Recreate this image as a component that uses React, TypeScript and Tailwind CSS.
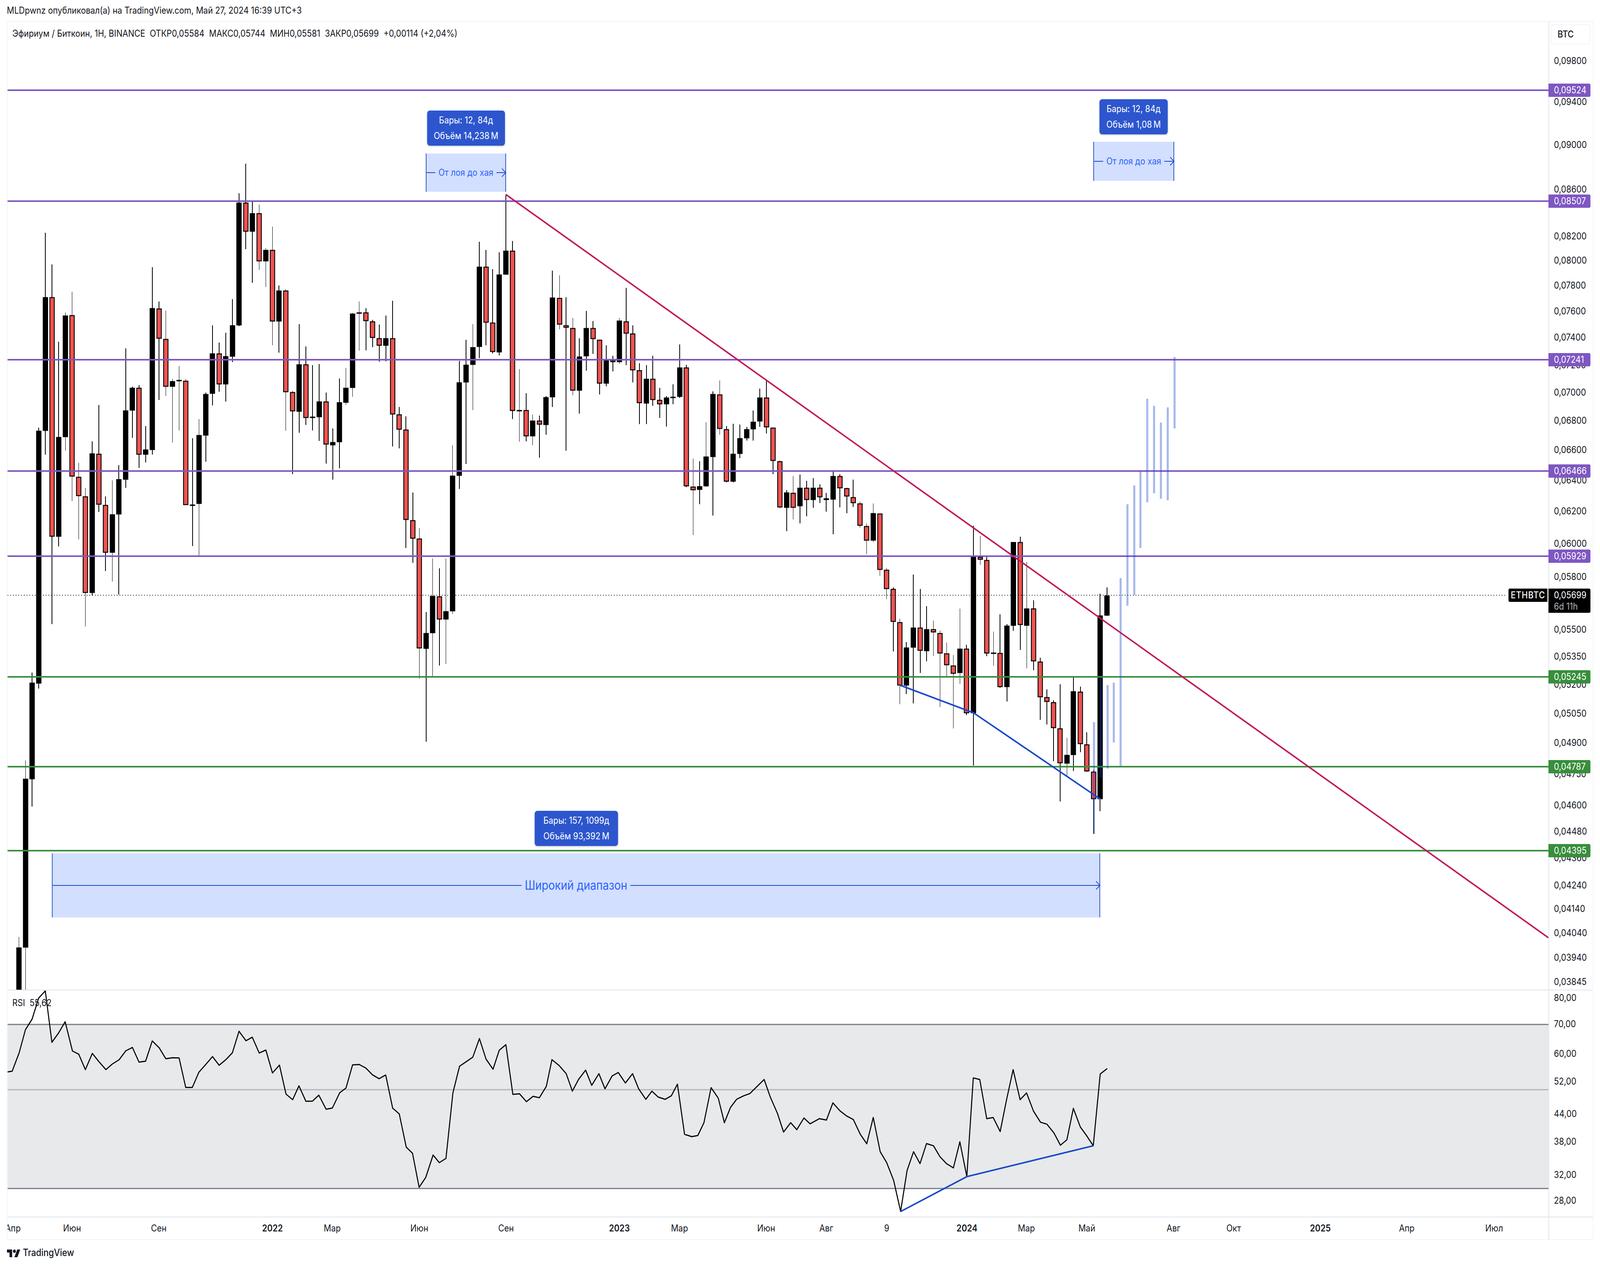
const PAGE_W = 4686;
const PLOT_X = 22;
const MAIN_Y = 56;
const RSI_Y = 2536;

type Candle = [number, "u" | "d", number, number, number, number];

// x, direction, body top, body bottom, wick top, wick bottom (page pixels)
const candles: Candle[] = [
  [55.5, "u", 2426, 2540, 2399, 2540], [75, "u", 1994, 2426, 1947, 2540], [94, "u", 1748, 1995, 1722, 2065],
  [113.6, "u", 1103, 1750, 1095, 1763], [133, "u", 761, 1103, 596, 1164], [152.5, "d", 761, 1374, 677, 1598],
  [172, "u", 1119, 1374, 875, 1399], [191.5, "u", 808, 1119, 800, 1154], [211, "d", 807, 1220, 747, 1283],
  [230.5, "d", 1221, 1270, 1185, 1381], [250, "d", 1271, 1518, 1249, 1604], [270, "u", 1161, 1518, 1130, 1525],
  [289.6, "d", 1162, 1292, 1037, 1311], [309, "d", 1293, 1415, 1271, 1462], [329, "u", 1317, 1415, 1230, 1489],
  [348, "u", 1227, 1317, 1191, 1522], [368, "u", 1051, 1228, 892, 1249], [387.5, "u", 993, 1051, 990, 1121],
  [407, "d", 993, 1164, 986, 1198], [426.6, "u", 1151, 1164, 1091, 1184], [446, "u", 789, 1152, 684, 1164],
  [466, "d", 790, 867, 772, 1024], [485.6, "d", 868, 990, 795, 1014], [505, "u", 976, 990, 970, 1133],
  [524.6, "u", 973, 975, 937, 1102], [544, "d", 975, 1293, 970, 1293], [563.7, "u", 1292, 1294, 1122, 1398],
  [583, "u", 1114, 1290, 1073, 1422], [602.7, "u", 1009, 1115, 1005, 1182], [622, "u", 905, 1008, 833, 1038],
  [642, "d", 905, 984, 877, 1003], [661, "u", 912, 984, 852, 1028], [681, "u", 833, 913, 766, 927],
  [700, "u", 519, 833, 495, 835], [720, "d", 519, 593, 419, 638], [739, "u", 546, 593, 516, 724],
  [759, "d", 546, 669, 524, 691], [778.6, "u", 640, 669, 635, 735], [798, "d", 640, 823, 580, 884],
  [817, "u", 744, 823, 731, 903], [837, "d", 744, 1004, 740, 1103], [857, "d", 1004, 1053, 1002, 1214],
  [876, "u", 933, 1054, 830, 1108], [896, "d", 933, 1070, 887, 1088], [915.6, "u", 1067, 1069, 935, 1102],
  [935, "u", 1028, 1068, 932, 1129], [955, "d", 1028, 1138, 1005, 1187], [974.6, "u", 1132, 1140, 1097, 1228],
  [994, "u", 1030, 1132, 969, 1199], [1013, "u", 993, 1031, 942, 1037], [1032.6, "u", 803, 993, 801, 1016],
  [1052, "u", 800, 803, 772, 898], [1071.6, "d", 800, 822, 789, 897], [1091, "d", 823, 865, 819, 889],
  [1110.7, "d", 866, 885, 831, 926], [1130, "u", 866, 885, 808, 925], [1150, "d", 866, 1061, 770, 1143],
  [1169, "d", 1061, 1100, 1042, 1148], [1189, "d", 1100, 1331, 1066, 1403], [1209, "d", 1332, 1379, 1261, 1441],
  [1228, "d", 1379, 1660, 1352, 1738], [1248, "u", 1621, 1661, 1567, 1899], [1267, "u", 1526, 1621, 1430, 1732],
  [1287, "d", 1527, 1586, 1455, 1704], [1306, "u", 1565, 1586, 1430, 1700], [1325.5, "u", 1218, 1565, 1140, 1572],
  [1345, "u", 979, 1218, 924, 1252], [1365, "u", 934, 979, 870, 1188], [1385, "u", 889, 934, 830, 1050],
  [1404, "u", 683, 888, 619, 917], [1423.6, "d", 683, 826, 640, 884], [1443, "d", 826, 901, 689, 905],
  [1462, "u", 703, 902, 646, 910], [1481.6, "u", 642, 703, 498, 703], [1501, "d", 642, 1052, 617, 1073],
  [1521, "u", 1050, 1052, 945, 1131], [1541, "d", 1050, 1117, 1007, 1130], [1560, "u", 1077, 1117, 1061, 1140],
  [1580, "d", 1077, 1087, 1064, 1172], [1599, "u", 1017, 1088, 1014, 1113], [1618, "u", 762, 1017, 693, 1042],
  [1638.8, "d", 763, 831, 705, 843], [1658, "d", 833, 839, 761, 1154], [1677.6, "d", 840, 1000, 814, 1012],
  [1697, "u", 913, 1000, 866, 1059], [1717, "u", 840, 912, 796, 949], [1737, "d", 840, 868, 822, 906],
  [1756, "d", 870, 982, 870, 1010], [1775.5, "u", 922, 982, 884, 989], [1795, "d", 922, 927, 911, 951],
  [1814, "u", 821, 927, 814, 932], [1834, "d", 823, 854, 737, 935], [1853, "d", 854, 948, 833, 979],
  [1872.5, "d", 948, 1032, 930, 1086], [1893, "u", 970, 1033, 935, 1086], [1912, "d", 970, 1024, 911, 1039],
  [1932, "d", 1024, 1035, 993, 1070], [1952, "u", 1018, 1035, 1014, 1092], [1971, "u", 1016, 1018, 984, 1035],
  [1991, "u", 941, 1016, 882, 1019], [2010, "d", 941, 1245, 934, 1247], [2030, "d", 1246, 1255, 1174, 1370],
  [2049, "u", 1245, 1254, 1181, 1291], [2068, "u", 1169, 1245, 1081, 1247], [2088, "u", 1009, 1170, 1002, 1320],
  [2108, "d", 1010, 1098, 974, 1113], [2127.5, "d", 1099, 1233, 1091, 1235], [2147, "u", 1162, 1233, 1085, 1235],
  [2167, "u", 1122, 1162, 1087, 1173], [2187, "u", 1099, 1122, 1093, 1128], [2206, "u", 1080, 1099, 1051, 1128],
  [2225.5, "u", 1018, 1079, 995, 1093], [2245, "d", 1018, 1094, 975, 1110], [2264, "d", 1095, 1180, 1095, 1214],
  [2284, "d", 1181, 1299, 1179, 1302], [2304, "u", 1261, 1300, 1255, 1360], [2323, "d", 1262, 1300, 1219, 1330],
  [2343, "u", 1249, 1296, 1215, 1340], [2362.6, "d", 1249, 1280, 1231, 1322], [2381.6, "u", 1249, 1280, 1224, 1300],
  [2401, "d", 1249, 1273, 1240, 1288], [2420, "d", 1276, 1280, 1262, 1310], [2440, "u", 1219, 1279, 1207, 1368],
  [2460, "d", 1219, 1250, 1214, 1299], [2480, "d", 1250, 1271, 1249, 1314], [2499, "d", 1273, 1288, 1228, 1298],
  [2518.7, "d", 1289, 1346, 1284, 1351], [2538, "d", 1347, 1384, 1340, 1419], [2557.6, "u", 1314, 1384, 1289, 1388],
  [2577, "d", 1315, 1459, 1315, 1474], [2596.5, "d", 1459, 1508, 1454, 1534], [2616, "d", 1508, 1592, 1504, 1668],
  [2635.4, "d", 1593, 1755, 1584, 1803], [2654.6, "u", 1658, 1755, 1644, 1777], [2675, "u", 1607, 1658, 1471, 1801],
  [2695, "d", 1607, 1666, 1508, 1723], [2714, "u", 1611, 1667, 1552, 1693], [2733.7, "d", 1611, 1619, 1589, 1680],
  [2753, "d", 1621, 1673, 1614, 1810], [2772.6, "d", 1673, 1703, 1645, 1733], [2792, "d", 1704, 1725, 1677, 1865],
  [2811.5, "u", 1661, 1723, 1558, 1751], [2830.6, "d", 1661, 1826, 1651, 1831], [2851, "u", 1424, 1826, 1346, 1960],
  [2871, "d", 1426, 1433, 1372, 1446], [2890, "d", 1434, 1673, 1426, 1680], [2910, "u", 1671, 1674, 1617, 1705],
  [2929, "d", 1672, 1759, 1573, 1761], [2949, "u", 1602, 1759, 1598, 1796], [2968, "u", 1388, 1602, 1388, 1615],
  [2988, "d", 1388, 1600, 1374, 1664], [3007, "u", 1558, 1602, 1439, 1711], [3027, "d", 1558, 1693, 1537, 1716],
  [3046.6, "d", 1694, 1785, 1684, 1843], [3066, "d", 1785, 1797, 1765, 1855], [3085.5, "d", 1798, 1864, 1793, 1949],
  [3104.6, "d", 1865, 1954, 1752, 2052], [3125, "u", 1933, 1955, 1889, 1986], [3143.5, "u", 1770, 1933, 1735, 1974],
  [3164, "d", 1771, 1905, 1758, 1926], [3183, "d", 1906, 1975, 1875, 1976], [3203, "d", 1976, 2046, 1972, 2135],
  [3222, "u", 1576, 2046, 1520, 2077], [3242, "u", 1525, 1576, 1504, 1577],
];

// faded copy of the earlier move, x / top / bottom
const ghostBars = [
  [3204, 1849, 2135], [3224, 1735, 1990], [3244, 1754, 1968], [3262, 1748, 1901], [3282, 1480, 1961],
  [3302, 1291, 1551], [3322, 1243, 1523], [3340, 1207, 1403], [3360, 1021, 1286], [3380, 1039, 1263],
  [3400, 1082, 1277], [3420, 1043, 1281], [3440, 914, 1097],
];

const levels = [
  { y: 231, label: "0,09524", color: "#7e57c2" },
  { y: 515, label: "0,08507", color: "#7e57c2" },
  { y: 921, label: "0,07241", color: "#7e57c2" },
  { y: 1206, label: "0,06466", color: "#7e57c2" },
  { y: 1424, label: "0,05929", color: "#7e57c2" },
  { y: 1733, label: "0,05245", color: "#388e3c" },
  { y: 1963, label: "0,04787", color: "#388e3c" },
  { y: 2178, label: "0,04395", color: "#388e3c" },
];

const priceTicks: [string, number][] = [
  ["0,09800", 156], ["0,09400", 261], ["0,09000", 371], ["0,08600", 485], ["0,08200", 605], ["0,08000", 667],
  ["0,07800", 731], ["0,07600", 797], ["0,07400", 864], ["0,07200", 935], ["0,07000", 1005], ["0,06800", 1077],
  ["0,06600", 1152], ["0,06400", 1230], ["0,06200", 1309], ["0,06000", 1392], ["0,05800", 1477], ["0,05500", 1612],
  ["0,05350", 1681], ["0,05200", 1753], ["0,05050", 1827], ["0,04900", 1902], ["0,04750", 1982], ["0,04600", 2062],
  ["0,04480", 2129], ["0,04360", 2197], ["0,04240", 2267], ["0,04140", 2327], ["0,04040", 2389], ["0,03940", 2452],
  ["0,03845", 2514],
];

const rsiTicks: [string, number][] = [
  ["80,00", 2555], ["70,00", 2622], ["60,00", 2698], ["52,00", 2769], ["44,00", 2852], ["38,00", 2923],
  ["32,00", 3008], ["28,00", 3074],
];

const timeTicks: [string, number, boolean?][] = [
  ["Апр", 38], ["Июн", 211], ["Сен", 465], ["2022", 798, true], ["Мар", 973], ["Июн", 1228], ["Сен", 1482],
  ["2023", 1814, true], ["Мар", 1990], ["Июн", 2244], ["Авг", 2420], ["9", 2597], ["2024", 2832, true],
  ["Мар", 3006], ["Май", 3183], ["Авг", 3437], ["Окт", 3613], ["2025", 3867, true], ["Апр", 4120], ["Июл", 4376],
];

const rsiLeft = [
  20, 582, 35, 578, 55, 485, 73, 368, 92, 315, 111, 208, 130, 172, 149, 432, 168, 385, 187, 328, 208, 476, 226, 492,
  245, 570, 265, 488, 285, 532, 304, 570, 322, 542, 342, 520, 361, 475, 380, 458, 399, 532, 418, 527, 437, 425,
  457, 460, 476, 515, 495, 510, 514, 511, 533, 660, 552, 660, 571, 583, 590, 545, 610, 504, 629, 548, 648, 520,
  667, 485, 686, 376, 706, 424, 724, 406, 744, 486, 763, 471, 782, 587, 802, 547, 821, 694, 840, 722, 858, 652,
  878, 730, 897, 729, 915, 699, 936, 770, 954, 764, 975, 687, 993, 663, 1012, 546, 1031, 544, 1050, 562, 1069, 596,
  1088, 616, 1107, 597, 1127, 765, 1146, 794, 1166, 962, 1184, 993, 1203, 1165, 1222, 1115, 1243, 1002, 1261, 1040,
  1280, 1019, 1300, 687, 1319, 553, 1338, 530, 1357, 507, 1376, 413, 1395, 517, 1415, 568, 1433, 472, 1452, 444,
  1472, 695, 1491, 692, 1511, 732, 1530, 705, 1548, 712, 1568, 655,
];
const rsiMiddle = [
  541, 908, 548, 913, 555, 920, 561, 935, 567, 925, 574, 917, 580, 930, 587, 920, 593, 933, 600, 922, 606, 919,
  613, 928, 620, 920, 626, 933, 633, 942, 639, 935, 645, 940, 652, 942, 658, 939, 664, 929, 671, 972, 678, 974,
  684, 973, 690, 962, 697, 932, 704, 941, 710, 962, 716, 949, 722, 942, 729, 939, 735, 937, 742, 931, 749, 925,
  755, 940, 762, 954, 768, 970, 775, 962, 781, 968, 788, 958, 794, 963,
];
const rsiRight = [
  0, 818, 14, 825, 27, 738, 41, 778, 55, 805, 68, 822, 82, 897, 95, 945, 108, 812, 122, 985, 135, 1040, 149, 1130,
  163, 1287, 176, 1080, 189, 985, 202, 1045, 215, 944, 229, 955, 242, 1010, 255, 1045, 269, 1067, 282, 935, 296, 1111,
  309, 612, 322, 620, 336, 818, 349, 812, 363, 883, 376, 720, 389, 570, 403, 722, 416, 688, 430, 780, 444, 836,
  457, 846, 471, 890, 484, 952, 497, 925, 510, 766, 524, 860, 537, 905, 550, 955, 564, 592, 578, 565,
];

const toPoints = (values: number[], convert: (x: number, y: number) => [number, number]) => {
  const out: string[] = [];
  for (let i = 0; i < values.length; i += 2) {
    const [x, y] = convert(values[i], values[i + 1]);
    out.push(`${x.toFixed(1)},${y.toFixed(1)}`);
  }
  return out;
};

const rsiPoints = [
  ...toPoints(rsiLeft, (x, y) => [x * 1.0204, 2450 + y * 0.5064]),
  ...toPoints(rsiMiddle, (x, y) => [x * 2.988, y * 2.988]),
  ...toPoints(rsiRight, (x, y) => [2400 + x * 1.458, 2450 + y * 0.5064]),
].join(" ");

const Bubble = ({ lines, className }: { lines: string[]; className: string }) => (
  <div className={`absolute z-10 flex flex-col items-center justify-center rounded-[8px] bg-[#2d56ce] text-[24px] leading-[40px] text-white shadow-[0_2px_4px_rgba(0,0,0,0.2)] ${className}`}>
    {lines.map((line) => (
      <div key={line} className="whitespace-nowrap">{line}</div>
    ))}
  </div>
);

const RangeBox = ({ text, className, textClass }: { text: string; className: string; textClass: string }) => (
  <div className={`absolute z-10 flex items-center border-x-2 border-[#1848cc] bg-[#d3dffe] ${className}`}>
    <div className="h-[2px] flex-1 bg-[#1848cc]" />
    <span className={`whitespace-nowrap px-[9px] text-[#2962ff] ${textClass}`}>{text}</span>
    <div className="h-[2px] flex-1 bg-[#1848cc]" />
    <svg className="absolute right-[-3px] top-1/2 -translate-y-1/2" width="14" height="24" viewBox="0 0 14 24">
      <path d="M1 1.5 L12.5 12 L1 22.5" fill="none" stroke="#1848cc" strokeWidth="2" />
    </svg>
  </div>
);

const LevelLabel = ({ y, top, text, color }: { y: number; top: number; text: string; color: string }) => (
  <div
    className="absolute left-[-2px] z-10 flex h-[34px] w-[123px] items-center rounded-r-[4px] pl-[16px] text-[24px] text-white"
    style={{ top: y - top - 17, backgroundColor: color }}
  >
    {text}
  </div>
);

const AxisTick = ({ y, top, text }: { y: number; top: number; text: string }) => (
  <div className="absolute left-[14px] -translate-y-1/2 text-[24px] leading-none text-[#131722]" style={{ top: y - top }}>
    {text}
  </div>
);

const MainChart = () => (
  <svg className="absolute inset-0" width="4513" height="2478" viewBox={`${PLOT_X} ${MAIN_Y} 4513 2478`}>
    {candles.map(([x, dir, top, bottom, high, low]) => (
      <g key={x}>
        <line x1={x} x2={x} y1={high} y2={low} stroke="#000" strokeWidth="2" shapeRendering="crispEdges" />
        <rect
          x={x - 6.5}
          y={top + 1}
          width="13"
          height={Math.max(bottom - top - 2, 1)}
          fill={dir === "u" ? "#000" : "#ef5350"}
          stroke="#000"
          strokeWidth="2.5"
        />
      </g>
    ))}
    <line x1={PLOT_X} x2="4413" y1="1524" y2="1524" stroke="#000" strokeWidth="2" strokeDasharray="2 6" />
    {levels.map((l) => (
      <line key={l.y} x1={PLOT_X} x2="4535" y1={l.y} y2={l.y} stroke={l.color} strokeWidth="4" shapeRendering="crispEdges" />
    ))}
    {ghostBars.map(([x, top, bottom]) => (
      <rect key={x} x={x - 3} y={top} width="6" height={bottom - top} fill="#1848cc" fillOpacity="0.38" />
    ))}
    <polyline points="1481.6,498 4535,2401" fill="none" stroke="#c2185b" strokeWidth="4" />
    <polyline points="2635,1754 2851,1825 3222.7,2046" fill="none" stroke="#1848cc" strokeWidth="4" />
  </svg>
);

const RsiChart = () => (
  <svg className="absolute inset-0" width="4513" height="581" viewBox={`${PLOT_X} ${RSI_Y} 4513 581`}>
    <rect x={PLOT_X} y="2623" width="4513" height="420" fill="#e8e9eb" />
    <line x1={PLOT_X} x2="4535" y1="2623" y2="2623" stroke="#787b86" strokeWidth="3" />
    <line x1={PLOT_X} x2="4535" y1="2790" y2="2790" stroke="#b2b5be" strokeWidth="3" />
    <line x1={PLOT_X} x2="4535" y1="3043" y2="3043" stroke="#787b86" strokeWidth="3" />
    <polyline points={rsiPoints} fill="none" stroke="#000" strokeWidth="3" strokeLinejoin="round" />
    <polyline points="2637.6,3102 2831.6,3012.6 3202,2933.6" fill="none" stroke="#1848cc" strokeWidth="4" />
  </svg>
);

const TvLogo = () => (
  <svg width="40" height="22" viewBox="0 0 36 20">
    <path d="M14 20H7V9H0V2h14v18zM28 20h-8l7.5-18h8L28 20z" fill="#131722" />
    <circle cx="20" cy="6" r="4" fill="#131722" />
  </svg>
);

export default function App() {
  // the browser window can be narrower than the 4686px design, squeeze the page to fit it
  const fitX = Math.min(window.innerWidth / PAGE_W, 1);

  return (
    <div className="h-[3244px] w-screen overflow-hidden">
      <div
        className="flex h-[3244px] w-[4686px] origin-top-left flex-col bg-white font-['Inter',sans-serif] text-[#131722]"
        style={{ transform: `scaleX(${fitX})` }}
      >
        <div className="flex h-[54px] items-center pl-[20px] text-[24px] whitespace-nowrap">
          MLDpwnz опубликовал(а) на TradingView.com, Май 27, 2024 16:39 UTC+3
        </div>

        <div className="ml-[20px] flex h-[3121px] w-[4647px] flex-col border-2 border-[#f0f3fa]">
          {/* price pane */}
          <div className="flex h-[2478px]">
            <div className="relative w-[4513px] overflow-hidden">
              <MainChart />
              <div className="absolute left-[14px] top-[16px] z-10 text-[24px] leading-[28px] whitespace-pre">
                {"Эфириум / Биткоин, 1H, BINANCE  ОТКР0,05584  МАКС0,05744  МИН0,05581  ЗАКР0,05699  +0,00114 (+2,04%)"}
              </div>
              <Bubble lines={["Бары: 12, 84д", "Объём 14,238\u202fM"]} className="left-[1229px] top-[227px] h-[90px] w-[228px]" />
              <RangeBox text="От лоя до хая" className="left-[1225px] top-[337px] h-[98px] w-[235px]" textClass="text-[24px]" />
              <Bubble lines={["Бары: 12, 84д", "Объём 1,08\u202fM"]} className="left-[3198px] top-[198px] h-[90px] w-[200px]" />
              <RangeBox text="От лоя до хая" className="left-[3180px] top-[307px] h-[100px] w-[237px]" textClass="text-[24px]" />
              <Bubble lines={["Бары: 157, 1099д", "Объём 93,392\u202fM"]} className="left-[1544px] top-[2020px] h-[90px] w-[244px]" />
              <RangeBox text="Широкий диапазон" className="left-[130px] top-[2129px] h-[164px] w-[3070px]" textClass="text-[32px]" />
              <div className="absolute left-[4396px] top-[1451px] z-10 flex h-[34px] w-[114px] items-center justify-center rounded-l-[4px] bg-black text-[24px] font-medium tracking-[1px] text-white">
                ETHBTC
              </div>
            </div>
            <div className="relative flex-1 border-l-2 border-[#e0e3eb]">
              <div className="absolute left-[5px] top-[6px] z-10 flex h-[52px] w-[116px] items-center rounded-[8px] border-2 border-[#f0f3fa] pl-[18px] text-[24px] font-medium">
                BTC
              </div>
              {priceTicks.map(([text, y]) => (
                <AxisTick key={text} y={y} top={MAIN_Y} text={text} />
              ))}
              {levels.map((l) => (
                <LevelLabel key={l.y} y={l.y} top={MAIN_Y} text={l.label} color={l.color} />
              ))}
              <div className="absolute left-[-2px] top-[1451px] z-10 flex h-[62px] w-[123px] flex-col justify-center rounded-r-[4px] bg-black pl-[16px] text-[24px] leading-[29px] text-white">
                <span>0,05699</span>
                <span className="text-[#b2b5be]">6d 11h</span>
              </div>
            </div>
          </div>

          {/* rsi pane */}
          <div className="flex h-[583px] border-y-2 border-[#e0e3eb]">
            <div className="relative w-[4513px] overflow-hidden">
              <RsiChart />
              <div className="absolute left-[14px] top-[18px] text-[24px] leading-[28px] whitespace-pre">{"RSI  55,62"}</div>
            </div>
            <div className="relative flex-1 border-l-2 border-[#e0e3eb]">
              {rsiTicks.map(([text, y]) => (
                <AxisTick key={text} y={y} top={RSI_Y} text={text} />
              ))}
            </div>
          </div>

          {/* time axis */}
          <div className="flex flex-1">
            <div className="relative w-[4513px] overflow-hidden">
              {timeTicks.map(([text, x, bold]) => (
                <div
                  key={`${text}${x}`}
                  className={`absolute top-1/2 -translate-x-1/2 -translate-y-1/2 text-[24px] leading-none ${bold ? "font-semibold" : ""}`}
                  style={{ left: x - PLOT_X }}
                >
                  {text}
                </div>
              ))}
            </div>
            <div className="flex-1 border-l-2 border-[#e0e3eb]" />
          </div>
        </div>

        <div className="flex flex-1 items-center gap-[7px] pb-[4px] pl-[20px]">
          <TvLogo />
          <span className="text-[25px] font-medium text-[#131722]">TradingView</span>
        </div>
      </div>
    </div>
  );
}
